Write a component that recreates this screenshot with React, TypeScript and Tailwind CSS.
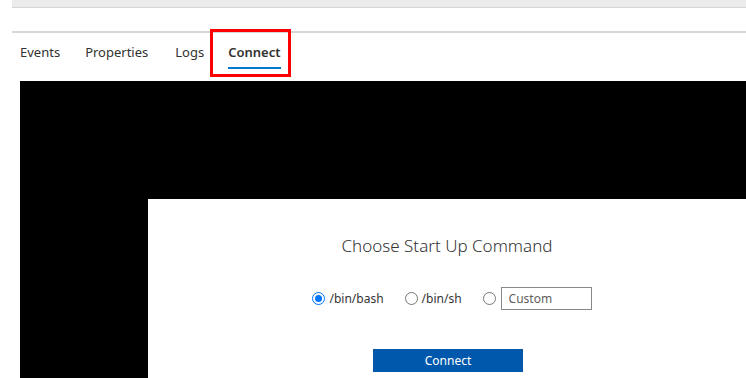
import { useState } from "react";

const tabs = [
  { label: "Events", gap: "mr-[25px]" },
  { label: "Properties", gap: "mr-[27px]" },
  { label: "Logs", gap: "mr-[24px]" },
  { label: "Connect", gap: "" },
];

const options = ["/bin/bash", "/bin/sh"];

const Radio = ({ checked, onClick }: { checked: boolean; onClick: () => void }) => (
  <span
    onClick={onClick}
    className={`flex h-[13px] w-[13px] items-center justify-center rounded-full border ${
      checked ? "border-[#0075ff]" : "border-[#767676]"
    } bg-white`}
  >
    {checked && <span className="h-[7px] w-[7px] rounded-full bg-[#0075ff]" />}
  </span>
);

const App = () => {
  const [choice, setChoice] = useState(0);

  return (
    <div className="flex h-[378px] w-full flex-col overflow-hidden bg-white font-['Segoe_UI','Noto_Sans',sans-serif] text-[#323130]">
      {/* page chrome */}
      <div className="ml-[12px] h-[8px] border-b border-[#d4d4d4] bg-[#ebebeb]" />
      <div className="h-[23px]" />
      <div className="ml-[12px] h-[2px] bg-[#d6d6d6]" />

      {/* tabs */}
      <div className="flex h-[48px] items-start pl-[20px] pt-[10px] text-[13px]">
        {tabs.map((t) => (
          <div key={t.label} className={`relative ${t.gap} ${t.label === "Connect" ? "font-semibold" : ""}`}>
            <span className="leading-[18px]">{t.label}</span>
            {t.label === "Connect" && (
              <>
                <div className="mt-[4px] h-[2px] w-full bg-[#0078d4]" />
                <div className="absolute left-[-18px] top-[-14px] h-[48px] w-[81px] border-[3px] border-[#ff0000]" />
              </>
            )}
          </div>
        ))}
      </div>

      {/* console area */}
      <div className="ml-[20px] flex flex-1 flex-col bg-black pl-[128px] pt-[118px]">
        <div className="flex flex-1 flex-col items-center bg-white pt-[35px]">
          <h2 className="text-[17px] font-light leading-[24px] text-[#333]">Choose Start Up Command</h2>
          <div className="ml-[10px] mt-[29px] flex items-center text-[12px] text-[#333]">
            {options.map((o, i) => (
              <label key={o} className="mr-[21px] flex items-center gap-[4px]">
                <Radio checked={choice === i} onClick={() => setChoice(i)} />
                <span>{o}</span>
              </label>
            ))}
            <label className="flex items-center gap-[5px]">
              <Radio checked={choice === 2} onClick={() => setChoice(2)} />
              <input
                placeholder="Custom"
                className="h-[23px] w-[91px] border border-[#8a8886] px-[7px] text-[12px] outline-none placeholder:text-[#605e5c]"
              />
            </label>
          </div>
          <button className="ml-[2px] mt-[39px] h-[23px] w-[150px] bg-[#0058ad] text-[12px] text-white">Connect</button>
        </div>
      </div>
    </div>
  );
};

export default App;
